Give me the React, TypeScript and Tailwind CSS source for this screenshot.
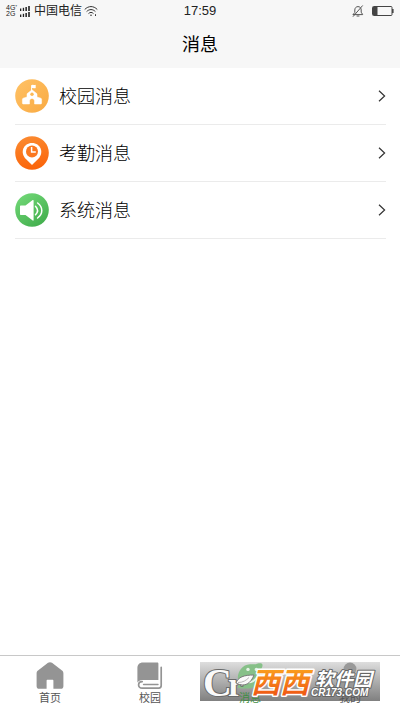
import type { ReactNode } from "react";

function SignalIcon() {
  return (
    <svg viewBox="0 0 10 11" className="h-[11px] w-2.5" fill="#222" aria-hidden="true">
      <rect x="0" y="2.5" width="1.3" height="2.5" />
      <rect x="2.8" y="1.8" width="1.3" height="3.2" />
      <rect x="5.4" y="1" width="1.5" height="4" />
      <rect x="8.2" y="0" width="1.6" height="5" />
      <rect x="0" y="8.5" width="1.3" height="2.5" />
      <rect x="2.8" y="7.8" width="1.3" height="3.2" />
      <rect x="5.4" y="7" width="1.5" height="4" />
      <rect x="8.2" y="6" width="1.6" height="5" />
    </svg>
  );
}

function WifiIcon() {
  return (
    <svg viewBox="0 0 14 12" className="h-3 w-3.5" fill="none" stroke="#333" strokeWidth="1" strokeLinecap="round" aria-hidden="true">
      <path d="M1 4.2C4.5 .6 9.5 .6 13 4.2" />
      <path d="M2.9 6.3C5.3 3.9 8.7 3.9 11.1 6.3" />
      <path d="M4.8 8.3C6.1 7 7.9 7 9.2 8.3" />
      <circle cx="7" cy="10.2" r=".8" fill="#333" stroke="none" />
      <path d="M11.5 9.6v1" />
    </svg>
  );
}

function MutedBellIcon() {
  return (
    <svg viewBox="0 0 12 12" className="h-3 w-3" fill="none" stroke="#555" strokeWidth="1" strokeLinecap="round" strokeLinejoin="round" aria-hidden="true">
      <path d="M1.3 9.6h9.4L9.2 7.2V5C9.2 3 7.9 1.6 6 1.6S2.8 3 2.8 5v2.2z" />
      <path d="M5 11h2M10.4 .8L1.2 11.4" />
    </svg>
  );
}

function BatteryIcon() {
  return (
    <svg viewBox="0 0 22 10" className="h-2.5 w-[22px]" aria-hidden="true">
      <rect x=".5" y=".5" width="19.5" height="9" rx="1" fill="none" stroke="#444" />
      <rect x="1" y="1" width="4.5" height="8" fill="#444" />
      <rect x="20" y="3" width="1.6" height="4" fill="#444" />
    </svg>
  );
}

function SchoolIcon() {
  return (
    <svg viewBox="0 0 34 34" className="h-[34px] w-[34px]" aria-hidden="true">
      <defs>
        <linearGradient id="school" x1="0" y1="0" x2="1" y2="1">
          <stop offset="0" stopColor="#ffc266" />
          <stop offset="1" stopColor="#f9aa42" />
        </linearGradient>
      </defs>
      <circle cx="17" cy="17" r="16.8" fill="url(#school)" />
      <path d="M16.6 12V6.2" stroke="#fff" strokeWidth="1" />
      <path d="M16.8 6.2c1.6-1 2.4.6 3.9-.5v3.2c-1.5 1-2.4-.5-3.9.4z" fill="#fff" />
      <path d="M17 10.8l5 4v3.2l3.8 1.2c.5.2.8.5.8 1V24c0 .7-.4 1-1 1h-6.1v-3c0-3.4-5-3.4-5 0v3H8.4c-.6 0-1-.3-1-1v-3.8c0-.5.3-.8.8-1L12 18v-3.2z" fill="#fff" stroke="#fff" strokeWidth=".5" strokeLinejoin="round" />
      <circle cx="17" cy="15.3" r="1.7" fill="#fdb954" />
    </svg>
  );
}

function AttendanceIcon() {
  return (
    <svg viewBox="0 0 34 34" className="h-[34px] w-[34px]" aria-hidden="true">
      <defs>
        <linearGradient id="attendance" x1=".3" y1="0" x2=".5" y2="1">
          <stop offset="0" stopColor="#fb8a30" />
          <stop offset="1" stopColor="#fb640a" />
        </linearGradient>
      </defs>
      <circle cx="17" cy="17" r="16.8" fill="url(#attendance)" />
      <path d="M17 29l-6.6-6.6c-5.6-5.8-2-15.4 6.600-15.4s12.200 9.600 6.600 15.400z" fill="#fff" />
      <circle cx="17" cy="15.4" r="6" fill="#fb7820" />
      <path d="M16.6 11v5h4.2" fill="none" stroke="#fff" strokeWidth="1.5" />
    </svg>
  );
}

function SpeakerIcon() {
  return (
    <svg viewBox="0 0 34 34" className="h-[34px] w-[34px]" aria-hidden="true">
      <defs>
        <linearGradient id="speaker" x1=".1" y1="0" x2=".8" y2="1">
          <stop offset="0" stopColor="#73d978" />
          <stop offset="1" stopColor="#41ad4c" />
        </linearGradient>
      </defs>
      <circle cx="17" cy="17" r="16.8" fill="url(#speaker)" />
      <path d="M6 12.6h4.5l7.2-5.5c.5-.4.9-.2.9.4v19.6c0 .6-.4.8-.9.4L10.5 22H6c-.6 0-1-.4-1-1v-7.4c0-.6.4-1 1-1z" fill="#fff" />
      <path d="M20.5 13.2c2.5 2.6 2.5 6 0 8.6M22.6 10c5.6 4.2 5.6 10.8 0 15" fill="none" stroke="#fff" strokeWidth="1.5" strokeLinecap="round" />
    </svg>
  );
}

function ChevronIcon() {
  return (
    <svg viewBox="0 0 8 12" className="h-3 w-2" fill="none" stroke="#333" strokeWidth="1.2" aria-hidden="true">
      <path d="M1 .8L6.6 6 1 11.2" />
    </svg>
  );
}

function HomeIcon() {
  return (
    <svg viewBox="0 0 28 28" className="h-7 w-7" aria-hidden="true">
      <path d="M12 .8c1.200-.9 2.800-.9 4 0l10 7.800c1 .8 1.400 1.600 1.400 2.800v12.800c0 1.600-1 2.600-2.600 2.600h-7.400v-8c0-.6-.4-1-1-1h-4.800c-.6 0-1 .4-1 1v8H3.200c-1.600 0-2.600-1-2.600-2.600V11.400c0-1.200.4-2 1.400-2.800z" fill="#949494" />
    </svg>
  );
}

function BookIcon() {
  return (
    <svg viewBox="0 0 28 28" className="h-7 w-7" fill="#949494" aria-hidden="true">
      <path d="M6.8 .4h14.4c.8 0 1.2.4 1.2 1.2v16.4H6.4c-2.2 0-4 1-5 2.600V5.800C1.400 2.600 3.600.4 6.800.4z" />
      <path d="M25.200 5.400v18.200c0 1.800-.8 2.600-2.400 2.600H6.200c-4.800 0-4.800-6.600 0-6.600" fill="none" stroke="#949494" strokeWidth="1.700" strokeLinecap="round" />
      <path d="M7.500 22.500h14.500" stroke="#949494" strokeWidth="1.400" strokeLinecap="round" />
    </svg>
  );
}

function MessageIcon() {
  return (
    <svg viewBox="0 0 28 28" className="h-7 w-7" aria-hidden="true">
      <path d="M1.5 25.5c1-2 1.6-3.4 1-5.400C0 12 5 2.600 14 2.200c2.600-.1 4.200.4 6 0C22 1 26 .8 26.400 2.400c.4 1.600-.4 3-1 4.600C28.600 17 22 26.400 12 26.400c-4 0-7 .6-10.500-.9z" fill="#86c088" />
      <circle cx="12" cy="7.4" r="1.7" fill="#e6f3e6" />
      <circle cx="20.4" cy="7.4" r="1.7" fill="#e6f3e6" />
      <path d="M10 20c5 1.400 10-1.400 12-7" fill="none" stroke="#e6f3e6" strokeWidth="1.800" strokeLinecap="round" />
    </svg>
  );
}

function PersonIcon() {
  return (
    <svg viewBox="0 0 28 28" className="h-7 w-7" fill="#999" aria-hidden="true">
      <circle cx="14" cy="7" r="6.4" />
      <path d="M2 27c0-8 4-12 12-12s12 4 12 12z" />
    </svg>
  );
}

const messages: { label: string; icon: ReactNode }[] = [
  { label: "校园消息", icon: <SchoolIcon /> },
  { label: "考勤消息", icon: <AttendanceIcon /> },
  { label: "系统消息", icon: <SpeakerIcon /> },
];

const tabs: { label: string; icon: ReactNode; active?: boolean }[] = [
  { label: "首页", icon: <HomeIcon /> },
  { label: "校园", icon: <BookIcon /> },
  { label: "消息", icon: <MessageIcon />, active: true },
  { label: "我的", icon: <PersonIcon /> },
];

function StatusBar() {
  return (
    <div className="grid h-[22px] grid-cols-[1fr_auto_1fr] items-center px-1.5 text-xs text-[#222]">
      <div className="flex items-center">
        <span className="flex w-3.5 flex-col text-[7px] leading-[6px]">
          <span>4G⁺</span>
          <span>2G</span>
        </span>
        <SignalIcon />
        <span className="mr-0.5 ml-1">中国电信</span>
        <WifiIcon />
      </div>
      <span className="text-[13px]">17:59</span>
      <div className="flex items-center justify-end gap-2">
        <MutedBellIcon />
        <BatteryIcon />
      </div>
    </div>
  );
}

/** Logo of the site badge: a "Cr" with a leaf, then the two-part name. */
function SiteLogo() {
  return (
    <svg viewBox="0 0 180 39" className="pointer-events-none absolute right-5 bottom-2.5 h-[39px] w-[180px] overflow-visible" role="img" aria-label="西西软件园">
      <defs>
        <linearGradient id="orange" x1="0" y1="0" x2="0" y2="1">
          <stop offset=".2" stopColor="#fba31f" />
          <stop offset=".9" stopColor="#ee5312" />
        </linearGradient>
      </defs>
      <g fontFamily="Liberation Serif, serif" fontWeight="bold" fill="#fafafa" stroke="#6a6a6a" strokeWidth="2" paintOrder="stroke">
        <text x="3" y="34" fontSize="40">C</text>
        <text x="28" y="34" fontSize="34">r</text>
      </g>
      <path d="M36 21c2-6 8-8 18-8-3 8-9 13-18 8z" fill="#fafafa" stroke="#7a7a7a" strokeWidth="1" />
      <path d="M38 20.500c5 0 8-2 11-5" fill="none" stroke="#9a9a9a" strokeWidth=".7" />
      <g fontFamily="'Noto Sans CJK SC', sans-serif" fontStyle="italic" fontWeight="bold" paintOrder="stroke" strokeLinejoin="round">
        <text x="51" y="31" fontSize="29" fill="url(#orange)" stroke="#fff" strokeWidth="3">西西</text>
        <text x="115" y="24" fontSize="19" fill="#fff" stroke="#666" strokeWidth="2">软件园</text>
        <text x="111" y="34" fontSize="10" fontFamily="Liberation Sans, sans-serif" fill="#fff" stroke="#666" strokeWidth="2">CR173.COM</text>
      </g>
    </svg>
  );
}

export default function App() {
  return (
    <div className="flex min-h-screen flex-col bg-white font-['Liberation_Sans','Noto_Sans_CJK_SC',sans-serif] text-black">
      <header className="bg-[#f7f7f7]">
        <StatusBar />
        <h1 className="h-[46px] text-center text-lg leading-[46px]">消息</h1>
      </header>

      <main className="flex-1">
        <ul className="pr-3.5 pl-[15px]">
          {messages.map((m) => (
            <li key={m.label} className="border-b border-[#ebebeb]">
              <button type="button" className="flex h-14 w-full items-center text-left">
                {m.icon}
                <span className="flex-1 pt-0.5 pl-2.5 text-lg font-light">{m.label}</span>
                <ChevronIcon />
              </button>
            </li>
          ))}
        </ul>
      </main>

      <nav className="relative border-t border-[#c8c8c8]">
        <div className="absolute right-5 bottom-2.5 h-[39px] w-[180px] bg-linear-to-b from-[#dedede] to-[#808080]" />
        <ul className="relative grid grid-cols-4">
          {tabs.map((t) => (
            <li key={t.label}>
              <button
                type="button"
                className={`flex h-[55px] w-full flex-col items-center pt-1.5 text-[11px] leading-4 ${t.active ? "text-[#3f8f43]" : "text-[#555]"}`}
              >
                {t.icon}
                {t.label}
              </button>
            </li>
          ))}
        </ul>
        <SiteLogo />
      </nav>
    </div>
  );
}
